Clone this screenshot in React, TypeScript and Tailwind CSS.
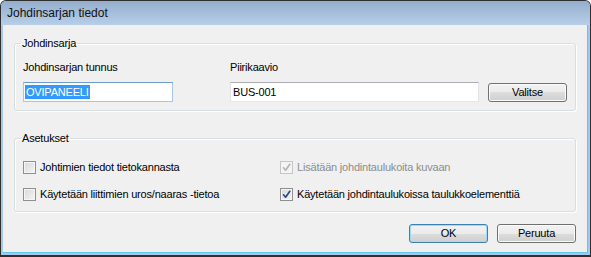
import React from "react";

function Check({ checked, disabled, label }: { checked?: boolean; disabled?: boolean; label: string }) {
  return (
    <div className="flex items-center h-[13px]">
      <div
        className={
          "w-[13px] h-[13px] border flex items-center justify-center shrink-0 " +
          (disabled ? "border-[#c6c6c6] bg-[#f4f4f4]" : "border-[#8e8f8f] bg-[linear-gradient(135deg,#d9d9d9,#f4f4f4)] shadow-[inset_0_0_0_1px_#f6f6f6]")
        }
      >
        {checked && (
          <svg width="11" height="11" viewBox="0 0 11 11">
            <path
              d="M2.5 5.8 L4.6 8.2 L8.8 2.3"
              fill="none"
              stroke={disabled ? "#b4b4b4" : "#2a4a86"}
              strokeWidth="1.7"
              strokeLinecap="round"
              strokeLinejoin="round"
            />
          </svg>
        )}
      </div>
      <span className={"ml-[4px] leading-[13px] " + (disabled ? "text-[#8d8d8d]" : "text-black")}>{label}</span>
    </div>
  );
}

function Btn({ children, def }: { children: React.ReactNode; def?: boolean }) {
  return (
    <button
      className={
        "w-[79px] h-[19px] rounded-[3px] border flex items-center justify-center text-black leading-none bg-[linear-gradient(to_bottom,#f2f2f2_0%,#ebebeb_50%,#dddddd_50%,#cfcfcf_100%)] " +
        (def ? "border-[#3c7fb1] shadow-[inset_0_0_0_1px_#9fdaf7]" : "border-[#707070] shadow-[inset_0_0_0_1px_#fbfbfb]")
      }
    >
      {children}
    </button>
  );
}

export default function App() {
  return (
    <div className="w-[591px] h-[257px] flex flex-col bg-[#a9c8e8] border border-[#2f2f2f] border-b-2 rounded-t-[6px] overflow-hidden font-['Liberation_Sans',Arial,sans-serif] text-[11px] tracking-[-0.2px]">
      <div className="h-[24px] shrink-0 flex items-center pl-[6px] bg-[linear-gradient(to_bottom,#93aecd,#b7cee8)]">
        <span className="text-[12px] tracking-normal text-[#111]">Johdinsarjan tiedot</span>
      </div>
      <div className="flex-1 mx-[2px] mb-[2px] bg-[#f0f0f0] border-b border-r border-[#63c4ea] flex flex-col px-[11px] pt-[12px]">
        <fieldset className="border border-[#d5dfe5] rounded-[3px] shadow-[inset_1px_1px_0_#fff,1px_1px_0_#fff]">
          <legend className="ml-[6px] px-[1px] leading-[13px] text-black">Johdinsarja</legend>
          <div className="pl-[8px] pt-[11px] pb-[8px] flex">
            <div className="w-[207px] flex flex-col">
              <span className="leading-[13px] text-black">Johdinsarjan tunnus</span>
              <div className="mt-[8px] w-[150px] h-[20px] border border-[#a7c6e5] border-t-[#6e9cc8] bg-white flex items-center pl-[1px]">
                <span className="bg-[#3399ff] text-white leading-[14px] px-[1px]">OVIPANEELI</span>
              </div>
            </div>
            <div className="flex flex-col">
              <span className="leading-[13px] text-black">Piirikaavio</span>
              <div className="mt-[8px] flex items-center">
                <div className="w-[249px] h-[20px] border border-[#e2e3ea] border-t-[#abadb3] border-b-[#e3e9ef] bg-white flex items-center pl-[2px] text-black">
                  BUS-001
                </div>
                <div className="ml-[9px]">
                  <Btn>Valitse</Btn>
                </div>
              </div>
            </div>
          </div>
        </fieldset>
        <fieldset className="mt-[21px] border border-[#d5dfe5] rounded-[3px] shadow-[inset_1px_1px_0_#fff,1px_1px_0_#fff]">
          <legend className="ml-[6px] px-[1px] leading-[13px] text-black">Asetukset</legend>
          <div className="pl-[8px] pt-[16px] pb-[10px] grid grid-cols-[257px_1fr] gap-y-[14px]">
            <Check label="Johtimien tiedot tietokannasta" />
            <Check checked disabled label="Lisätään johdintaulukoita kuvaan" />
            <Check label="Käytetään liittimien uros/naaras -tietoa" />
            <Check checked label="Käytetään johdintaulukoissa taulukkoelementtiä" />
          </div>
        </fieldset>
        <div className="flex justify-end gap-[9px] mt-[12px]">
          <Btn def>OK</Btn>
          <Btn>Peruuta</Btn>
        </div>
      </div>
    </div>
  );
}
